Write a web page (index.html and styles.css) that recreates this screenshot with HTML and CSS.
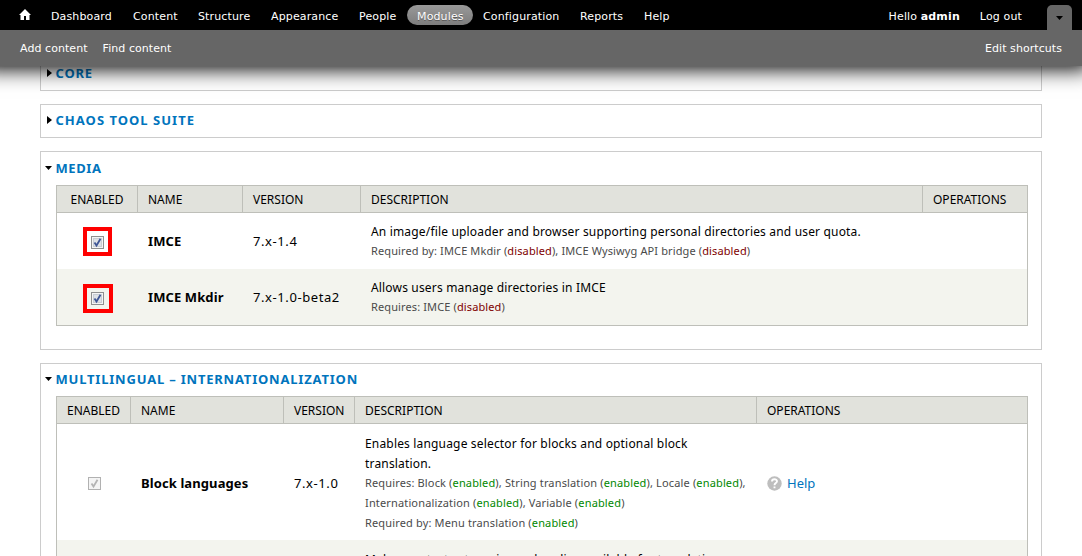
FILE: index.html
```
<!DOCTYPE html>
<html lang="en"><head><meta charset="utf-8"><title>Modules</title><link rel="stylesheet" href="styles.css"></head>
<body>
<header class="toolbar">
  <nav class="menu">
    <a class="home"><svg width="12" height="12" viewBox="0 0 12 12"><path d="M6 0 12 6H10.500V11H7V7H5V11H1.500V6H0Z" fill="#fff"/></svg></a>
    <a class="w-dash">Dashboard</a><a class="w-cont">Content</a><a class="w-stru">Structure</a><a class="w-appe">Appearance</a><a class="w-peop">People</a><a class="w-modu active">Modules</a><a class="w-conf">Configuration</a><a class="w-repo">Reports</a><a class="w-help">Help</a>
    <span class="user"><a>Hello <b>admin</b></a><a class="logout">Log out</a><a class="toggle"><svg width="7" height="4" viewBox="0 0 7 4"><path d="M0 0H7L3.500 4Z"/></svg></a></span>
  </nav>
  <div class="drawer"><a>Add content</a><a>Find content</a><a class="edit">Edit shortcuts</a></div>
</header>
<main>
  <section class="fieldset core"><h2><i class="arrow right"></i>CORE</h2></section>
  <section class="fieldset chaos"><h2><i class="arrow right"></i>CHAOS TOOL SUITE</h2></section>
  <section class="fieldset media"><h2><i class="arrow down"></i>MEDIA</h2>
    <table class="modules">
      <colgroup><col class="m1"><col class="m2"><col class="m3"><col class="m4"><col class="m5"></colgroup>
      <thead><tr><th class="c">ENABLED</th><th>NAME</th><th>VERSION</th><th>DESCRIPTION</th><th>OPERATIONS</th></tr></thead>
      <tbody>
      <tr class="r56"><td class="c"><span class="mark low"><svg class="check" viewBox="0 0 13 13"><rect x=".5" y=".5" width="12" height="12" fill="#f4f4f4" stroke="#8e8f8f"/><rect x="2.500" y="2.500" width="8" height="8" fill="#dde1e6" stroke="#c8cdd4"/><path d="M3.500 6.500 5.500 9.500 9.500 2.800" fill="none" stroke="#3f5695" stroke-width="1.800"/></svg></span></td><td class="name">IMCE</td><td class="ver">7.x-1.4</td><td><p class="desc">An image/file uploader and browser supporting personal directories and user quota.</p><p class="req">Required by: IMCE Mkdir (<em class="off">disabled</em>), IMCE Wysiwyg API bridge (<em class="off">disabled</em>)</p></td><td></td></tr>
      <tr class="r56 even"><td class="c"><span class="mark wide"><svg class="check" viewBox="0 0 13 13"><rect x=".5" y=".5" width="12" height="12" fill="#f4f4f4" stroke="#8e8f8f"/><rect x="2.500" y="2.500" width="8" height="8" fill="#dde1e6" stroke="#c8cdd4"/><path d="M3.500 6.500 5.500 9.500 9.500 2.800" fill="none" stroke="#3f5695" stroke-width="1.800"/></svg></span></td><td class="name">IMCE Mkdir</td><td class="ver">7.x-1.0-beta2</td><td><p class="desc">Allows users manage directories in IMCE</p><p class="req">Requires: IMCE (<em class="off">disabled</em>)</p></td><td></td></tr>
      </tbody>
    </table>
  </section>
  <section class="fieldset multi"><h2><i class="arrow down"></i>MULTILINGUAL – INTERNATIONALIZATION</h2>
    <table class="modules">
      <colgroup><col class="i1"><col class="i2"><col class="i3"><col class="i4"><col class="i5"></colgroup>
      <thead><tr><th class="c">ENABLED</th><th>NAME</th><th>VERSION</th><th>DESCRIPTION</th><th>OPERATIONS</th></tr></thead>
      <tbody>
      <tr class="r116"><td class="c"><svg class="check" viewBox="0 0 13 13"><rect x=".5" y=".5" width="12" height="12" fill="#f4f4f4" stroke="#b1b1b1"/><path d="M3.500 6.500 5.500 9.500 9.500 2.800" fill="none" stroke="#b4b4b4" stroke-width="1.800"/></svg></td><td class="name">Block languages</td><td class="ver">7.x-1.0</td><td><p class="desc">Enables language selector for blocks and optional block<br>translation.</p><p class="req">Requires: Block (<em>enabled</em>), String translation (<em>enabled</em>), Locale (<em>enabled</em>),<br>Internationalization (<em>enabled</em>), Variable (<em>enabled</em>)<br>Required by: Menu translation (<em>enabled</em>)</p></td><td><a class="help"><svg width="15" height="15" viewBox="0 0 15 15"><circle cx="7.500" cy="7.500" r="7.200" fill="#bebebe"/><path d="M5 5.600C5 2.500 10 2.600 10 5.300 10 7.200 7.500 7 7.500 9.200M7.500 10.400V12.300" fill="none" stroke="#fff" stroke-width="1.900"/></svg>Help</a></td></tr>
      <tr class="r56 even last"><td></td><td></td><td></td><td><p>Makes contact categories and replies available for translation.</p></td><td></td></tr>
      </tbody>
    </table>
  </section>
</main>
</body></html>
```
FILE: styles.css
```
* { box-sizing: border-box; }
body { margin: 0; height: 556px; overflow: hidden; background: #fff; color: #000; font: 12px/20px "Noto Sans", sans-serif; }
.toolbar { position: relative; z-index: 2; height: 66px; margin: 0 -8px 0 -20px; background: #666; color: #fff; font: 11px/20px "DejaVu Sans", sans-serif; letter-spacing: .14px; box-shadow: 0 3px 20px #000; }
.menu { display: flex; align-items: flex-start; height: 30px; padding: 5px 18px 0 29px; background: #000; }
.menu a { height: 20px; line-height: 23px; padding: 0 10px; white-space: nowrap; }
.menu .home { width: 32px; }
.home svg { display: block; margin-top: 4px; }
.w-dash { width: 82px; } .w-cont { width: 65px; } .w-stru { width: 73px; } .w-appe { width: 88px; } .w-peop { width: 58px; }
.w-modu { width: 66px; } .w-conf { width: 97px; } .w-repo { width: 64px; } .w-help { width: 45px; }
.menu .active { background: linear-gradient(#999, #7d7d7d); border-radius: 10px; text-shadow: 0 1px 0 #555; }
.user { display: flex; margin-left: auto; }
.menu .toggle { width: 25px; height: 25px; padding: 11px 0 0 9px; margin: 0 0 0 15px; background: #666; border-radius: 5px 5px 0 0; }
.toggle svg { display: block; }
.drawer { display: flex; gap: 15px; height: 36px; padding: 9px 28px 0 40px; letter-spacing: .06px; }
.edit { margin-left: auto; }
main { padding: 0 40px; margin-top: -10px; }
.fieldset { border: 1px solid #ccc; margin-bottom: 13px; padding: 0 13px 0 15px; }
h2 { display: flex; align-items: center; margin: 0 0 0 -11px; font-size: 13px; line-height: 20px; color: #0074bd; gap: 3.5px; white-space: nowrap; letter-spacing: .8px; }
.chaos h2 { letter-spacing: 1.02px; }
.media h2 { letter-spacing: .6px; }
.core { height: 35px; padding-top: 6px; }
.chaos { height: 34px; padding-top: 5px; }
.media { height: 199px; padding-top: 6px; }
.multi { height: 400px; padding-top: 5px; }
.arrow { width: 7px; height: 8px; background: #000; }
.right { clip-path: polygon(2px 0, 7px 4px, 2px 8px); }
.down { clip-path: polygon(0 2px, 7px 2px, 3.500px 6px); }
.modules { table-layout: fixed; width: 972px; border-collapse: separate; border-spacing: 0; border: 1px solid #bebfb9; margin-top: 7px; }
.m1 { width: 81px; } .m2 { width: 105px; } .m3 { width: 118px; } .m4 { width: 562px; } .m5 { width: 104px; }
.i1 { width: 74px; } .i2 { width: 153px; } .i3 { width: 71px; } .i4 { width: 402px; } .i5 { width: 270px; }
th { height: 27px; padding: 2px 0 0 10px; background: #e1e2dc; border-right: 1px solid #bebfb9; border-bottom: 1px solid #bebfb9; font-weight: 400; font-size: 12px; text-align: left; }
th:last-child { border-right: 0; }
td { padding: 0 0 0 10px; vertical-align: middle; white-space: nowrap; }
th.c { padding: 2px 0 0; text-align: center; }
td.c { padding: 0; text-align: center; }
.r56 { height: 56px; }
.r116 { height: 116px; }
.r116 td { padding-top: 2px; }
.last td { padding-top: 10px; vertical-align: top; }
.even { background: #f3f4ee; }
.name { font-size: 13px; font-weight: 700; letter-spacing: .1px; }
.ver { font-size: 13px; letter-spacing: .58px; }
p { margin: 0; letter-spacing: .17px; }
.desc { padding-top: 1px; margin-bottom: -1px; }
.req { font-size: 11px; color: #4a4a4a; letter-spacing: .12px; }
.r116 .req { letter-spacing: .15px; }
em { font-style: normal; color: #080; }
em.off { color: #800000; }
.check { display: inline-block; width: 13px; height: 13px; vertical-align: middle; }
.mark { display: inline-flex; align-items: flex-start; width: 29px; height: 29px; padding: 4px; border: 4px solid #f00; vertical-align: middle; }
.low { padding-top: 5px; }
.wide { width: 30px; margin-top: 2px; }
.help { display: flex; align-items: center; gap: 5px; color: #0074bd; font-size: 13px; }
```
